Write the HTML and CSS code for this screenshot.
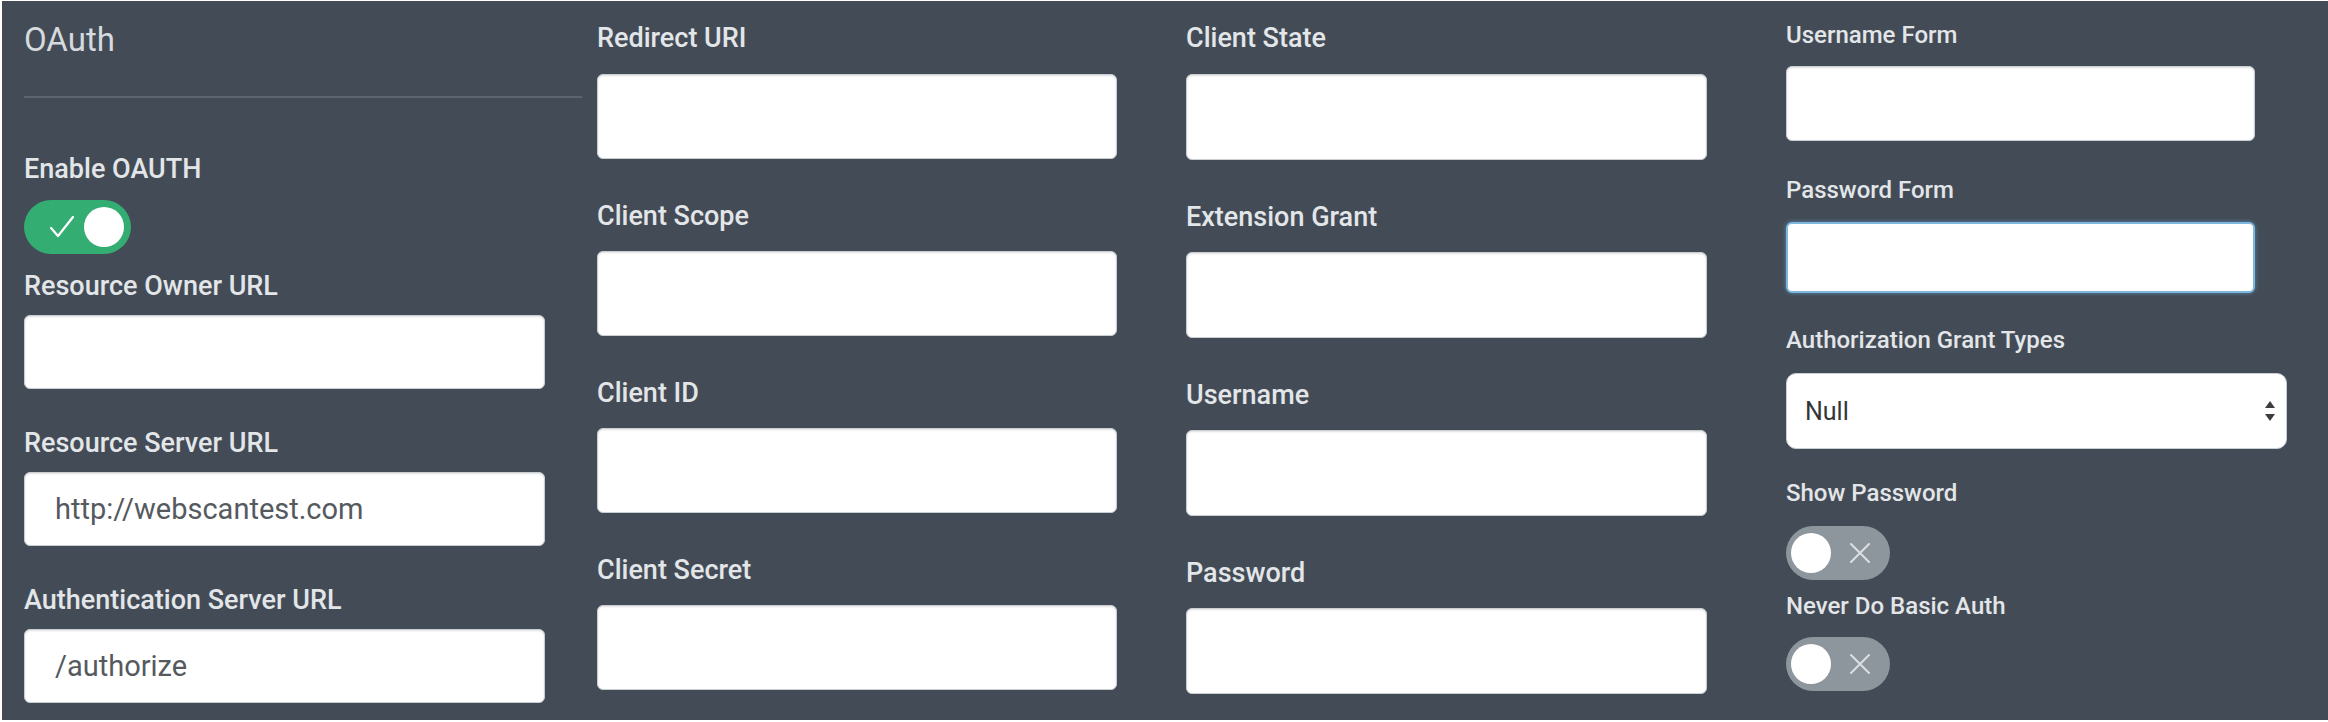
FILE: index.html
```html
<!DOCTYPE html>
<html lang="en">
<head>
<meta charset="utf-8">
<title>OAuth settings</title>
<link rel="stylesheet" href="styles.css">
</head>
<body>
<div class="panel">
  <div class="col col1">
    <div class="title">OAuth</div>
    <div class="rule"></div>
    <label class="lbl lbl-toggle1">Enable OAUTH</label>
    <span class="switch on">
      <svg class="check" viewBox="0 0 28 28" width="28" height="28"><path d="M3 15 L10 23 L25 4" fill="none" stroke="#ffffff" stroke-width="2.2" stroke-linecap="round" stroke-linejoin="round"/></svg>
      <span class="knob"></span>
    </span>
    <label class="lbl lbl-after-toggle">Resource Owner URL</label>
    <input class="inp inp1" type="text" value="">
    <label class="lbl lbl-c1">Resource Server URL</label>
    <input class="inp inp1" type="text" value="http://webscantest.com">
    <label class="lbl lbl-c1">Authentication Server URL</label>
    <input class="inp inp1" type="text" value="/authorize">
  </div>

  <div class="col col2">
    <label class="lbl lbl-first">Redirect URI</label>
    <input class="inp inp2" type="text">
    <label class="lbl lbl-c2">Client Scope</label>
    <input class="inp inp2" type="text">
    <label class="lbl lbl-c2">Client ID</label>
    <input class="inp inp2" type="text">
    <label class="lbl lbl-c2">Client Secret</label>
    <input class="inp inp2" type="text">
  </div>

  <div class="col col3">
    <label class="lbl lbl-first">Client State</label>
    <input class="inp inp3" type="text">
    <label class="lbl lbl-c2">Extension Grant</label>
    <input class="inp inp3" type="text">
    <label class="lbl lbl-c2">Username</label>
    <input class="inp inp3" type="text">
    <label class="lbl lbl-c2">Password</label>
    <input class="inp inp3" type="password">
  </div>

  <div class="col col4">
    <label class="slbl slbl-first">Username Form</label>
    <input class="inp inp4" type="text">
    <label class="slbl slbl-2">Password Form</label>
    <input class="inp inp4 focused" type="text">
    <label class="slbl slbl-3">Authorization Grant Types</label>
    <div class="select">
      <span class="select-val">Null</span>
      <svg class="arrows" viewBox="0 0 12 24" width="12" height="24"><path d="M6 2 L11 9 L1 9 Z" fill="#3d3d3d"/><path d="M6 22 L11 15 L1 15 Z" fill="#3d3d3d"/></svg>
    </div>
    <label class="slbl slbl-4">Show Password</label>
    <span class="switch off">
      <span class="knob"></span>
      <svg class="cross" viewBox="0 0 22 22" width="22" height="22"><path d="M2 2 L20 20 M20 2 L2 20" stroke="#dcdfe2" stroke-width="2" stroke-linecap="round"/></svg>
    </span>
    <label class="slbl slbl-5">Never Do Basic Auth</label>
    <span class="switch off">
      <span class="knob"></span>
      <svg class="cross" viewBox="0 0 22 22" width="22" height="22"><path d="M2 2 L20 20 M20 2 L2 20" stroke="#dcdfe2" stroke-width="2" stroke-linecap="round"/></svg>
    </span>
  </div>
</div>
</body>
</html>
```

FILE: styles.css
```css
html, body {
  margin: 0;
  padding: 0;
  background: #ffffff;
}

body {
  width: 2328px;
  height: 722px;
  overflow: hidden;
  font-family: "Roboto", "Liberation Sans", sans-serif;
}

.panel {
  margin: 1px 0 2px 2px;
  height: 719px;
  background: #434c56;
  display: grid;
  grid-template-columns: 573px 589px 600px 1fr;
  padding-left: 22px;
  box-sizing: border-box;
}

.col {
  display: flex;
  flex-direction: column;
  align-items: flex-start;
}

.col1 { padding-top: 18px; }
.col2 { padding-top: 21px; }
.col3 { padding-top: 21px; }
.col4 { padding-top: 20px; }

.title {
  font-size: 33px;
  font-weight: 400;
  line-height: 42px;
  color: #d6dadf;
}

.rule {
  margin-top: 35px;
  width: 558px;
  height: 2px;
  background: #5c656e;
}

.lbl {
  display: block;
  font-size: 27px;
  font-weight: 500;
  line-height: 32px;
  color: #e3e6e9;
}

.lbl-toggle1 { margin-top: 55px; margin-bottom: 15px; }
.lbl-after-toggle { margin-top: 16px; margin-bottom: 13px; }
.lbl-c1 { margin-top: 38px; margin-bottom: 13px; }
.lbl-first { margin-bottom: 20px; }
.lbl-c2 { margin-top: 41px; margin-bottom: 19px; }

.slbl {
  display: block;
  font-size: 24px;
  font-weight: 500;
  line-height: 28px;
  color: #e3e6e9;
}

.slbl-first { margin-bottom: 17px; }
.slbl-2 { margin-top: 35px; margin-bottom: 18px; }
.slbl-3 { margin-top: 33px; margin-bottom: 19px; }
.slbl-4 { margin-top: 30px; margin-bottom: 19px; }
.slbl-5 { margin-top: 12px; margin-bottom: 17px; }

.inp {
  display: block;
  box-sizing: border-box;
  background: #ffffff;
  border: 1px solid #c9ced3;
  border-radius: 6px;
  box-shadow: inset 0 1px 2px rgba(0, 0, 0, 0.12);
  font-family: "Roboto", "Liberation Sans", sans-serif;
  font-size: 29px;
  color: #555a5f;
  padding: 0 0 0 30px;
  margin: 0;
  outline: none;
}

.inp1 { width: 521px; height: 74px; }
.inp2 { width: 520px; height: 85px; }
.inp3 { width: 521px; height: 86px; }
.inp4 { width: 469px; height: 75px; }
.inp4.focused {
  height: 71px;
  border: 2px solid #7fb8de;
  box-shadow: 0 0 4px rgba(102, 175, 233, 0.6);
}

.select {
  box-sizing: border-box;
  width: 501px;
  height: 76px;
  background: #ffffff;
  border: 1px solid #c9ced3;
  border-radius: 10px;
  display: flex;
  align-items: center;
  justify-content: space-between;
  padding: 0 10px 0 18px;
}

.select-val {
  font-size: 25px;
  color: #333639;
}

.switch {
  position: relative;
  display: flex;
  align-items: center;
  box-sizing: border-box;
  width: 104px;
  height: 54px;
  border-radius: 27px;
  padding: 0 7px;
}

.switch.on {
  width: 107px;
  background: #34ad72;
  justify-content: space-between;
}

.switch.off {
  background: #8d959d;
  justify-content: flex-start;
  gap: 18px;
  padding-left: 5px;
}

.knob {
  width: 40px;
  height: 40px;
  border-radius: 50%;
  background: #ffffff;
}

.check {
  margin-left: 17px;
}
```
